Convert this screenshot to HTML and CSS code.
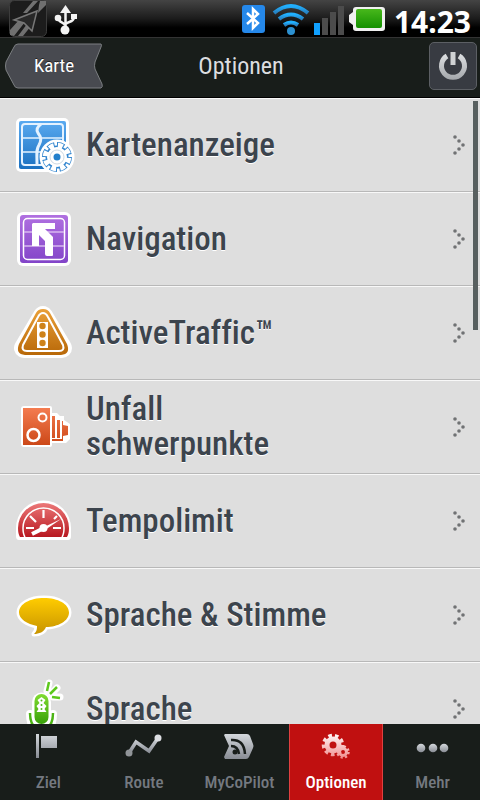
FILE: index.html
```html
<!DOCTYPE html>
<html lang="de">
<head>
    <meta charset="UTF-8">
    <meta name="viewport" content="width=device-width, initial-scale=1.0">
    <title>Optionen</title>
    <link rel="stylesheet" href="styles.css">
</head>
<body>
    <!-- Shared gradients and shapes -->
    <svg class="defs" width="0" height="0" aria-hidden="true">
        <defs>
            <linearGradient id="blue" x2="0" y2="1"><stop stop-color="#5aaaf0"/><stop offset="1" stop-color="#1a70c0"/></linearGradient>
            <linearGradient id="purple" x2="0" y2="1"><stop stop-color="#b070e0"/><stop offset="1" stop-color="#8244c8"/></linearGradient>
            <linearGradient id="orange" x2="0" y2="1"><stop stop-color="#eaa038"/><stop offset="1" stop-color="#b86808"/></linearGradient>
            <linearGradient id="coral" x2="0" y2="1"><stop stop-color="#f47c50"/><stop offset="1" stop-color="#cc4818"/></linearGradient>
            <linearGradient id="red" x2="0" y2="1"><stop stop-color="#ec7878"/><stop offset="1" stop-color="#b81820"/></linearGradient>
            <linearGradient id="yellow" x2="0" y2="1"><stop stop-color="#ffcc00"/><stop offset="1" stop-color="#c89400"/></linearGradient>
            <linearGradient id="green" x2="0" y2="1"><stop stop-color="#80dc30"/><stop offset="1" stop-color="#38a008"/></linearGradient>
            <linearGradient id="silver" x2="0" y2="1"><stop stop-color="#d4d8dc"/><stop offset="1" stop-color="#888c94"/></linearGradient>
            <linearGradient id="silverTall" gradientUnits="userSpaceOnUse" x1="0" y1="0" x2="0" y2="28"><stop stop-color="#e4e6e8"/><stop offset="1" stop-color="#a5a8ac"/></linearGradient>
            <linearGradient id="pink" gradientUnits="userSpaceOnUse" x1="0" y1="0" x2="0" y2="28"><stop stop-color="#ffffff"/><stop offset="1" stop-color="#f08888"/></linearGradient>
            <linearGradient id="sky" x2="0" y2="1"><stop stop-color="#20b0ff"/><stop offset="1" stop-color="#2880c0"/></linearGradient>
            <linearGradient id="battery" x2="0" y2="1"><stop stop-color="#48b81c"/><stop offset="1" stop-color="#149000"/></linearGradient>
            <symbol id="dots" viewBox="0 0 14 20">
                <g fill="#707274"><circle cx="2" cy="2" r="1.8"/><circle cx="6" cy="6" r="1.8"/><circle cx="10" cy="10" r="1.8"/><circle cx="6" cy="14" r="1.8"/><circle cx="2" cy="18" r="1.8"/></g>
            </symbol>
        </defs>
    </svg>

    <div class="status">
        <svg width="80" height="37" viewBox="0 0 80 37">
            <rect x="9.500" y="0.500" width="37" height="36" rx="5" fill="#1c1c1c" stroke="#3c3c3c"/>
            <path d="M33 1h5L27 13h-4zM40 1h6v4L38 13l1-8zM10 35v-5l9-10 6 2-11 14zM18 36l9-12 4 2-8 10z" fill="#707070"/>
            <path d="M37 11L14 20l10 3 8 8z" fill="#282828" stroke="#777" stroke-width="1.500"/>
            <g fill="none" stroke="#f4f4f4" stroke-width="2.500"><path d="M65.500 30V9M65 25c-1-3-7-2-7-8M66 24c1-3 8-1 8-7"/></g>
            <g fill="#f4f4f4"><path d="M60 13l5.500-8 5.500 8z"/><circle cx="65" cy="30" r="4.500"/><circle cx="58" cy="18" r="3.300"/><path d="M71 14h6v5h-6z"/></g>
        </svg>
        <svg class="status-right" width="148" height="37" viewBox="0 0 148 37">
            <rect x="4" y="5" width="23" height="28" rx="3" fill="#2588ea"/>
            <path d="M9 13l11 10-5 5V9l5 5L9 24" fill="none" stroke="#fff" stroke-width="2.500"/>
            <g fill="none" stroke="url(#sky)" stroke-width="4"><path d="M36 13q17-14 34 0"/><path d="M41 19q12-9 24 0"/><path d="M46 25q7-5 14 0"/></g>
            <circle cx="53" cy="31" r="4" fill="#2c90d0"/>
            <path d="M76 23h6v12h-6z" fill="#10a0ff"/>
            <path d="M84 18h6v17h-6zM92 12h6v23h-6zM100 6h6v29h-6z" fill="#4c4c4c"/>
            <path d="M118 7h26q3 0 3 3v18q0 3-3 3h-26q-3 0-3-3v-3l-4-3v-7l4-3v-2q0-3 3-3z" fill="#f0f0f0"/>
            <rect x="118" y="9" width="26" height="19" rx="2" fill="url(#battery)"/>
        </svg>
        <span class="clock">14:23</span>
    </div>

    <header>
        <button class="back">
            <svg width="98" height="46" viewBox="0 0 98 46"><path d="M13 1H96q1 1 0 3L90 19q-1 4 0 7l7 15q1 3-1 4H13q-3 0-4-3L1 27q-1-4 0-8L9 4q1-3 4-3z" fill="#484a50" stroke="#7c7f82"/></svg>
            <span>Karte</span>
        </button>
        <h1>Optionen</h1>
        <button class="power" aria-label="Beenden">
            <svg width="30" height="30" viewBox="0 0 30 30"><g fill="none" stroke="url(#silverTall)" stroke-width="5"><path d="M9 5a11.500 11.500 0 1 0 12 0"/><path d="M12.500 1h5v13h-5z" fill="#d0d2d4" stroke="none"/></g></svg>
        </button>
    </header>

    <main>
        <a class="row" href="#">
            <svg class="icon" viewBox="0 0 62 62">
                <rect x="2" y="4" width="53" height="54" rx="5" fill="#fff"/>
                <rect x="5" y="7" width="47" height="48" rx="2" fill="url(#blue)"/>
                <g fill="none" stroke="#e4f2ff"><rect x="8" y="10" width="41" height="41" rx="3" stroke-width="2"/><path d="M8 24H49M8 38H49" stroke-width="1.500"/><path d="M27 10c-4 3-5 6-3 9 4 5 3 8 1 12-3 5-2 8-2 20" stroke-width="3"/></g>
                <circle cx="43" cy="43" r="13" fill="#3185cf"/>
                <g fill="none"><circle cx="43" cy="43" r="13" stroke="#fff" stroke-width="9" pathLength="80"/><circle cx="43" cy="43" r="11.500" stroke="#3185cf" stroke-width="7" pathLength="80" stroke-dasharray="7.400 2.600"/><circle cx="43" cy="43" r="10.500" stroke="#3185cf" stroke-width="2"/><circle cx="43" cy="43" r="11.500" stroke="#fff" stroke-width="5.500" pathLength="80" stroke-dasharray="5.400 4.600" stroke-dashoffset="-1"/></g>
                <circle cx="43" cy="43" r="10" fill="#fff"/>
                <circle cx="43" cy="43" r="7" fill="#fff" stroke="#ccd8e2"/>
                <circle cx="43" cy="43" r="3.500" fill="#2380cc"/>
            </svg>
            <span class="label">Kartenanzeige</span>
            <svg class="arrow"><use href="#dots"/></svg>
        </a>
        <a class="row" href="#">
            <svg class="icon" viewBox="0 0 62 62">
                <rect x="3" y="4" width="54" height="54" rx="6" fill="#fff"/>
                <rect x="6" y="7" width="48" height="48" rx="3" fill="url(#purple)"/>
                <rect x="9.500" y="10.500" width="41" height="41" rx="4" fill="none" stroke="#fff" stroke-width="1.500"/>
                <path d="M10 24H50M10 38H50" stroke="#d8b8f0" stroke-width="1.500"/>
                <path d="M19 15H41V21H31l8 8V47q0 1-1 1h-5q-2 0-2-2V33l-6-6V38H18V16z" fill="#fff"/>
            </svg>
            <span class="label">Navigation</span>
            <svg class="arrow"><use href="#dots"/></svg>
        </a>
        <a class="row" href="#">
            <svg class="icon" viewBox="0 0 62 62">
                <path d="M29 14L10 46H48z" fill="#fff" stroke="#fff" stroke-width="20" stroke-linejoin="round"/>
                <path d="M29 7q5 0 7 4L53 42q4 10-6 11H11q-10-1-6-11L22 11q2-4 7-4z" fill="url(#orange)"/>
                <path d="M29 11q3 0 5 4L49 43q2 6-4 6H13q-6 0-4-6L24 15q2-4 5-4z" fill="none" stroke="#fff" stroke-width="2"/>
                <path d="M23 20H34V46H23z" fill="#fff"/>
                <g fill="#ce821a"><circle cx="28.500" cy="24" r="3.200"/><circle cx="28.500" cy="32.500" r="3.200"/><circle cx="28.500" cy="41" r="3.200"/></g>
            </svg>
            <span class="label">ActiveTraffic™</span>
            <svg class="arrow"><use href="#dots"/></svg>
        </a>
        <a class="row" href="#">
            <svg class="icon" viewBox="0 0 62 62">
                <path d="M10 10H36q2 0 2 2v5h5l3 3h4v4l6 4v15l-4 4h-14v2q0 2-2 2H10q-3 0-3-3V13q0-3 3-3z" fill="#fff"/>
                <path d="M9 12H36V49H9zM38 20h3v22h-3zM43 24h3v18h-3zM48 25h1v4l5 1v9l-5 1v5H38v-2h10z" fill="url(#coral)"/>
                <g fill="none" stroke="#fff"><circle cx="28.500" cy="21.500" r="4" stroke-width="2"/><circle cx="19.500" cy="39" r="6" stroke-width="2.500"/></g>
            </svg>
            <span class="label">Unfall<br>schwerpunkte</span>
            <svg class="arrow"><use href="#dots"/></svg>
        </a>
        <a class="row" href="#">
            <svg class="icon" viewBox="0 0 62 62">
                <path d="M5 50q-3 0-3-4V38a27.500 27.500 0 0 1 55 0v8q0 4-3 4z" fill="#fff"/>
                <path d="M6 47q-2-3-2-9a25.500 25 0 0 1 51 0q0 6-2 9z" fill="url(#red)"/>
                <path d="M11 47q-2-3-2-9a20.500 20 0 0 1 41 0q0 6-2 9" fill="none" stroke="#fff" stroke-width="1.500"/>
                <path d="M29.500 20v8M16 26l6 6M43 26l-3 3M12 38h8M39 38h8" stroke="#fff" stroke-width="2.200"/>
                <path d="M30 38L18 44" stroke="#fff" stroke-width="4"/><path d="M28 38L47 29 31 40z" fill="#fff"/><circle cx="29.500" cy="38" r="4" fill="#fff"/>
            </svg>
            <span class="label">Tempolimit</span>
            <svg class="arrow"><use href="#dots"/></svg>
        </a>
        <a class="row" href="#">
            <svg class="icon" viewBox="0 0 62 62">
                <path d="M30 14c14 0 25 6 25 14.500S44 43 32 43c-2 5-7 7-12 7 3-3 3-5 3-8C13 40 5 35 5 28.500 5 20 16 14 30 14z" fill="url(#yellow)" stroke="#fff" stroke-width="5" stroke-linejoin="round" paint-order="stroke"/>
            </svg>
            <span class="label">Sprache &amp; Stimme</span>
            <svg class="arrow"><use href="#dots"/></svg>
        </a>
        <a class="row" href="#">
            <svg class="icon" viewBox="0 0 62 62">
                <g fill="none" stroke="#fff" stroke-linecap="round" stroke-linejoin="round"><path d="M27.500 22V40M16 36q0 16 11.500 16T39 36" stroke-width="8"/><path d="M27.500 24v20" stroke-width="19"/><path d="M33 13l2-8M37 16l6-6M39 19h7" stroke-width="7"/></g>
                <path d="M33 13l2-9M36 16l7-7M38 19l8 1" stroke="#5cc81c" stroke-width="2.500"/>
                <rect x="20.500" y="16" width="14" height="30" rx="7" fill="url(#green)"/>
                <path d="M16 35q0 16 11.500 16T39 35" fill="none" stroke="#4cb414" stroke-width="2.500"/>
                <path d="M27.500 19l4 3-2 3 3 3-2 3 2 3h-10l2-3-2-3 3-3-2-3z" fill="#fff"/><g fill="#54bc1c"><circle cx="27.500" cy="22.500" r="1"/><circle cx="27.500" cy="27" r="1"/><circle cx="27.500" cy="31" r="1"/></g>
            </svg>
            <span class="label">Sprache</span>
            <svg class="arrow"><use href="#dots"/></svg>
        </a>
        <div class="scrollbar"></div>
    </main>

    <nav>
        <button class="tab">
            <svg width="40" height="28" viewBox="0 0 40 28"><path d="M8 2h3v24h-3zM13 4h16v12H13z" fill="url(#silver)"/></svg>
            Ziel
        </button>
        <button class="tab">
            <svg width="40" height="28" viewBox="0 0 40 28"><path d="M5 21L12 10 25 19 34 6" fill="none" stroke="url(#silver)" stroke-width="3.500"/><circle cx="5" cy="21" r="3.500" fill="#909498"/><circle cx="34" cy="6" r="3.500" fill="#dcdee2"/></svg>
            Route
        </button>
        <button class="tab">
            <svg width="40" height="28" viewBox="0 0 40 28"><path d="M6 2H28q2 0 3 2l3 8q1 2 0 4l-4 9q-1 2-3 2H6l-1-2 5-11L5 3z" fill="url(#silver)"/><path d="M12 8q13-1 14 14M12 14q7 0 8 8" fill="none" stroke="#181d1a" stroke-width="2.500"/><circle cx="16" cy="20" r="2.500" fill="#181d1a"/></svg>
            MyCoPilot
        </button>
        <button class="tab active">
            <svg width="40" height="28" viewBox="0 0 40 28"><g fill="none" stroke="url(#pink)"><circle cx="17" cy="13" r="6" stroke-width="5"/><circle cx="17" cy="13" r="9.500" stroke-width="3.500" stroke-dasharray="3.600 3.032"/><circle cx="27" cy="20" r="3.500" stroke-width="3"/><circle cx="27" cy="20" r="5.500" stroke-width="2.500" stroke-dasharray="2.200 2.120"/></g></svg>
            Optionen
        </button>
        <button class="tab">
            <svg width="40" height="28" viewBox="0 0 40 28"><g fill="url(#silver)"><circle cx="8" cy="16" r="4.300"/><circle cx="20" cy="16" r="4.300"/><circle cx="31" cy="16" r="4.300"/></g></svg>
            Mehr
        </button>
    </nav>
</body>
</html>
```
FILE: styles.css
```css
* {
    box-sizing: border-box;
}

body {
    margin: 0;
    height: 100vh;
    display: flex;
    flex-direction: column;
    overflow: hidden;
    background: #181d1a;
    font-family: "Roboto Condensed", Roboto, Arial, sans-serif;
    font-weight: 500;
    font-variant-ligatures: none;
}

svg {
    display: block;
    flex: none;
}

button {
    border: none;
    padding: 0;
    background: none;
    color: inherit;
    font-family: inherit;
    font-weight: inherit;
    cursor: pointer;
}

.defs {
    position: absolute;
}

.status {
    flex: none;
    height: 38px;
    display: flex;
    align-items: center;
    padding-right: 9px;
    background: linear-gradient(#444, #1c1c1c 50%, #000 75%);
    border-bottom: 1px solid #333;
}

.status-right {
    margin-left: auto;
}

.clock {
    margin-left: 8px;
    color: #fff;
    font: bold 30px/40px "Noto Sans", sans-serif;
    padding-top: 6px;
}

header {
    flex: none;
    height: 60px;
    display: grid;
    grid-template-columns: 1fr auto 1fr;
    align-items: center;
    padding: 0 3px 4px 5px;
    color: #dcdee0;
    border-bottom: 1px solid #000;
}

h1 {
    margin: 0;
    font-size: 24px;
    font-weight: 400;
}

.back {
    display: grid;
    justify-self: start;
    place-items: center;
    color: #fff;
    font-size: 19px;
    font-weight: 400;
    text-shadow: 0 -1px #222;
}

.back > * {
    grid-area: 1 / 1;
}

.power {
    justify-self: end;
    width: 48px;
    height: 48px;
    display: grid;
    place-items: center;
    background: #383b42;
    border: 1px solid #5c5f64;
    border-radius: 5px;
}

main {
    flex: 1;
    min-height: 0;
    overflow: hidden;
    position: relative;
    background: #dedede;
}

.row {
    height: 94px;
    display: flex;
    align-items: center;
    gap: 10px;
    padding: 0 13px 0 14px;
    border-top: 1px solid #f8f8f8;
    border-bottom: 1px solid #b8b8b8;
    color: #3c444d;
    text-decoration: none;
}

.icon {
    width: 62px;
    height: 62px;
}

.label {
    flex: 1;
    font-size: 33px;
    line-height: 35px;
    padding-bottom: 2px;
    text-shadow: 0 1px #fff;
}

.arrow {
    width: 14px;
    height: 20px;
}

.scrollbar {
    position: absolute;
    top: 3px;
    right: 2px;
    width: 5px;
    height: 229px;
    background: #586060;
}

nav {
    flex: none;
    height: 76px;
    display: flex;
}

.tab {
    flex: 1;
    display: flex;
    flex-direction: column;
    align-items: center;
    gap: 12px;
    padding-top: 8px;
    margin: 0 1px 0 2px;
    color: #747980;
    font-size: 17px;
    line-height: 20px;
}

.tab.active {
    background: #c01010;
    color: #fff;
    border: solid #e04040;
    border-width: 0 1px;
}
```
